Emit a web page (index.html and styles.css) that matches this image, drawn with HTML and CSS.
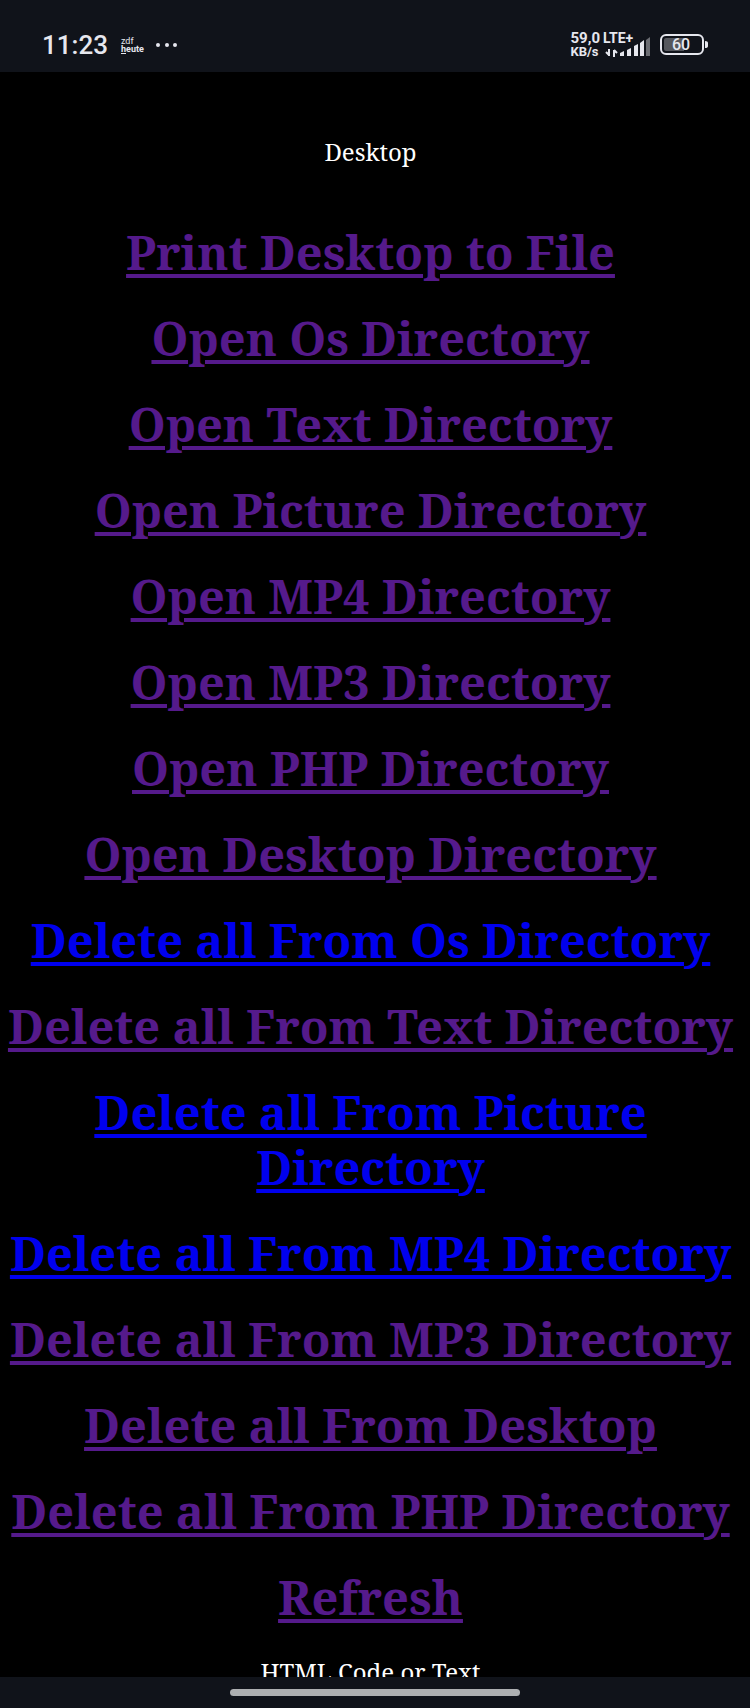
FILE: index.html
```html
<!DOCTYPE html>
<html lang="en">
<head>
    <meta charset="UTF-8">
    <meta name="viewport" content="width=device-width, initial-scale=1.0">
    <title>Desktop</title>
    <link rel="stylesheet" href="styles.css">
</head>
<body>

<header class="status-bar">
    <span class="clock">11:23</span>
    <span class="news">zdf<br><b><u>h</u>eute</b></span>
    <svg class="dots" width="22" height="6" viewBox="0 0 22 6">
        <circle cx="2" cy="3" r="2"/>
        <circle cx="11" cy="3" r="2"/>
        <circle cx="19" cy="3" r="2"/>
    </svg>

    <span class="speed">59,0<br><small>KB/s</small></span>
    <svg class="signal" width="48" height="26" viewBox="0 0 48 26">
        <text x="0" y="11">LTE+</text>
        <!-- data arrows -->
        <path d="M6 17v7M3 20l3 3M11 25v-7M11 18l3 3" stroke="#e6e7ee" stroke-width="2" fill="none"/>
        <!-- bars -->
        <path d="M17 24v-3l4-2v5zM24 24v-6l4-2v8zM31 24v-10l4-2v12zM37 24v-13l4-3v16z"/>
        <path class="weak" d="M43 24v-16l4-3v19z"/>
    </svg>
    <svg class="battery" width="48" height="22" viewBox="0 0 48 22">
        <rect x="1" y="1" width="42" height="19" rx="5" fill="none" stroke="#e6e7ee" stroke-width="2"/>
        <path class="charge" d="M6 4h18v13h-18q-2 0-2-2v-9q0-2 2-2z"/>
        <path d="M45 7q3 0 3 2v3q0 2-3 2z"/>
        <text x="21" y="16" text-anchor="middle">60</text>
    </svg>
</header>

<main class="page">
    <p class="label">Desktop</p>
    <nav class="links">
        <a href="#" class="visited">Print Desktop to File</a>
        <a href="#" class="visited">Open Os Directory</a>
        <a href="#" class="visited">Open Text Directory</a>
        <a href="#" class="visited">Open Picture Directory</a>
        <a href="#" class="visited">Open MP4 Directory</a>
        <a href="#" class="visited">Open MP3 Directory</a>
        <a href="#" class="visited">Open PHP Directory</a>
        <a href="#" class="visited">Open Desktop Directory</a>
        <a href="#">Delete all From Os Directory</a>
        <a href="#" class="visited">Delete all From Text Directory</a>
        <a href="#">Delete all From Picture Directory</a>
        <a href="#">Delete all From MP4 Directory</a>
        <a href="#" class="visited">Delete all From MP3 Directory</a>
        <a href="#" class="visited">Delete all From Desktop</a>
        <a href="#" class="visited">Delete all From PHP Directory</a>
        <a href="#" class="visited">Refresh</a>
    </nav>
    <p class="label">HTML Code or Text</p>
</main>

<footer class="nav-bar">
    <div class="handle"></div>
</footer>

</body>
</html>
```
FILE: styles.css
```css
body {
    display: flex;
    flex-direction: column;
    height: 100vh;
    margin: 0;
    background-color: #000;
    color: #fff;
    font-family: "Noto Serif", "DejaVu Serif Condensed", "Liberation Serif", serif;
}
.status-bar {
    display: flex;
    flex: none;
    align-items: center;
    box-sizing: border-box;
    height: 72px;
    padding: 18px 42px 0 42px;
    background-color: #10131a;
    color: #e6e7ee;
    font-family: Roboto, sans-serif;
}
.status-bar svg {
    overflow: visible;
    fill: #e6e7ee;
}
.clock {
    font-size: 26px;
    font-weight: 500;
}
.news {
    margin: 0 12px 0 13px;
    font-size: 9px;
    line-height: 8px;
}
.speed {
    margin-left: auto;
    font-size: 15px;
    font-weight: 700;
    line-height: 13px;
}
.speed small {
    font-size: 13px;
}
.signal {
    margin: 0 9px 0 3px;
}
.signal text {
    font-size: 14px;
    font-weight: 700;
}
.signal .weak {
    fill: #6b6d73;
}
.battery text {
    font-size: 16px;
    font-weight: 500;
}
.battery .charge {
    fill: #55575d;
}
.page {
    flex: 1;
    min-height: 0;
    overflow: hidden;
    padding: 64px 16px 0 7px;
    text-align: center;
}
.label {
    margin: 0;
    font-size: 24px;
    line-height: 32px;
}
.links {
    display: flex;
    flex-direction: column;
    align-items: center;
    gap: 31px;
    margin: 57px 0 31px;
}
.links a {
    color: #0000ee;
    font-size: 47px;
    font-weight: bold;
    line-height: 55px;
    text-decoration-thickness: 4px;
    text-underline-offset: 4px;
}
.links a.visited {
    color: #551a8b;
}
.nav-bar {
    display: flex;
    flex: none;
    align-items: center;
    justify-content: center;
    height: 31px;
    background-color: #10131a;
}
.handle {
    width: 290px;
    height: 7px;
    border-radius: 4px;
    background-color: #adafb1;
}
```
